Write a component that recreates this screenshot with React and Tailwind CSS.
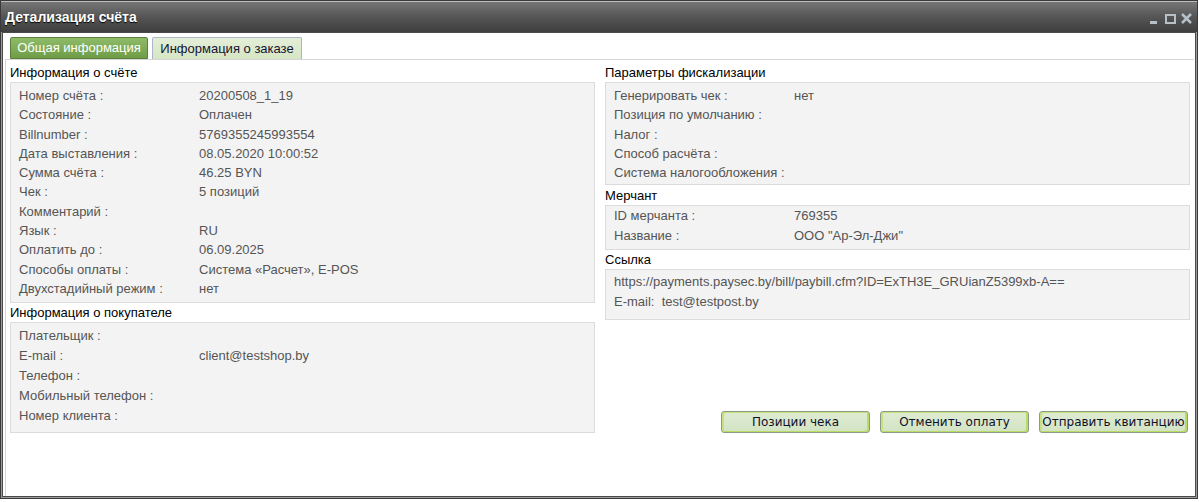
import React from "react";

const font = { fontFamily: '"Liberation Sans", Arial, sans-serif' };

const invoiceRows = [
  ["Номер счёта :", "20200508_1_19"],
  ["Состояние :", "Оплачен"],
  ["Billnumber :", "5769355245993554"],
  ["Дата выставления :", "08.05.2020 10:00:52"],
  ["Сумма счёта :", "46.25 BYN"],
  ["Чек :", "5 позиций"],
  ["Комментарий :", ""],
  ["Язык :", "RU"],
  ["Оплатить до :", "06.09.2025"],
  ["Способы оплаты :", "Система «Расчет», E-POS"],
  ["Двухстадийный режим :", "нет"],
];

const buyerRows = [
  ["Плательщик :", ""],
  ["E-mail :", "client@testshop.by"],
  ["Телефон :", ""],
  ["Мобильный телефон :", ""],
  ["Номер клиента :", ""],
];

const fiscalRows = [
  ["Генерировать чек :", "нет"],
  ["Позиция по умолчанию :", ""],
  ["Налог :", ""],
  ["Способ расчёта :", ""],
  ["Система налогообложения :", ""],
];

const merchantRows = [
  ["ID мерчанта :", "769355"],
  ["Название :", "ООО \"Ар-Эл-Джи\""],
];

function Rows({ rows, rowClass }) {
  return rows.map(([label, value]) => (
    <div key={label} className={`flex ${rowClass}`}>
      <span className="w-[180px] shrink-0">{label}</span>
      <span>{value}</span>
    </div>
  ));
}

function Section({ title, className, children }) {
  return (
    <div>
      <div className="h-[19px] leading-[19px] text-black">{title}</div>
      <div className={`bg-[#f3f3f3] border border-[#dcdcdc] px-2 text-[#555] ${className}`}>
        {children}
      </div>
    </div>
  );
}

function Button({ children }) {
  return (
    <button
      className="w-[149px] h-[22px] rounded-[3px] border border-[#8e9a88] bg-gradient-to-b from-[#dfecd3] to-[#d2e3c3] text-[12px] text-[#10102a] shadow-[inset_2px_1px_0_#c6e27e,inset_-2px_-1px_0_#b9dc62]"
      style={{ fontFamily: '"DejaVu Sans", Verdana, sans-serif' }}
    >
      {children}
    </button>
  );
}

export default function App() {
  return (
    <div className="w-[1199px] h-[502px] bg-white overflow-hidden text-[13px]" style={font}>
      <div className="w-[1198px] h-[499px] border border-[#3a3a3a] bg-[#9c9c9c] flex flex-col">
        {/* Title bar */}
        <div className="h-[31px] shrink-0 flex items-center justify-between pl-1 pr-[4px] bg-gradient-to-b from-[#767676] via-[#555] to-[#3e3e3e] border-t border-[#bdbdbd]">
          <span className="text-white font-bold text-[14px] [text-shadow:0_1px_1px_#000]">
            Детализация счёта
          </span>
          <svg width="44" height="12" viewBox="0 0 44 12" className="mt-[3px]">
            <rect x="1" y="8" width="7" height="3" fill="#b6c0c8" />
            <rect x="17" y="2" width="9" height="8" fill="none" stroke="#b6c0c8" strokeWidth="2" />
            <path d="M33 1 L42 10 M42 1 L33 10" stroke="#b6c0c8" strokeWidth="2.5" />
          </svg>
        </div>

        {/* Body */}
        <div className="flex-1 px-px pb-px flex">
          <div className="flex-1 bg-white border border-[#4a4a4a] pl-[2px] pr-[1px] pt-[4px] flex flex-col">
            {/* Tabs */}
            <div className="flex gap-[4px] pl-[5px] h-[22px] items-end">
              <div className="w-[138px] h-[22px] border border-[#5b7f3c] bg-gradient-to-b from-[#8ebb68] to-[#6f9d47] text-white flex items-center justify-center rounded-t-[2px]">
                Общая информация
              </div>
              <div className="w-[150px] h-[22px] border border-[#a9b7c6] border-b-0 bg-gradient-to-b from-[#e4eed8] to-[#d6e6c4] text-[#141432] flex items-center justify-center rounded-t-[2px]">
                Информация о заказе
              </div>
            </div>

            {/* Tab panel */}
            <div className="flex-1 border-l border-t border-[#d6d6d6] px-[4px] pt-[3px]">
              <div className="grid grid-cols-2 gap-[10px]">
                {/* Left column */}
                <div className="flex flex-col">
                  <Section title="Информация о счёте" className="pt-[3px] pb-[4px]">
                    <Rows rows={invoiceRows} rowClass="h-[19.3px] leading-[19.3px]" />
                  </Section>
                  <Section title="Информация о покупателе" className="pt-[3px] pb-[6px]">
                    <Rows rows={buyerRows} rowClass="h-[20px] leading-[20px]" />
                  </Section>
                </div>

                {/* Right column */}
                <div className="flex flex-col justify-between">
                  <div className="flex flex-col">
                    <Section title="Параметры фискализации" className="pt-[3px] pb-[2px]">
                      <Rows rows={fiscalRows} rowClass="h-[19.3px] leading-[19.3px]" />
                    </Section>
                    <div className="mt-[1px]">
                      <Section title="Мерчант" className="pt-0 pb-[3px]">
                        <Rows rows={merchantRows} rowClass="h-[20px] leading-[20px]" />
                      </Section>
                    </div>
                    <Section title="Ссылка" className="pt-[2px] pb-[8px]">
                      <div className="h-[19.5px] leading-[19.5px]">
                        https://payments.paysec.by/bill/paybill.cfm?ID=ExTH3E_GRUianZ5399xb-A==
                      </div>
                      <div className="h-[19.5px] leading-[19.5px] whitespace-pre">
                        {"E-mail:  test@testpost.by"}
                      </div>
                    </Section>
                  </div>
                  <div className="flex justify-end gap-[10px] pr-[2px]">
                    <Button>Позиции чека</Button>
                    <Button>Отменить оплату</Button>
                    <Button>Отправить квитанцию</Button>
                  </div>
                </div>
              </div>
            </div>
          </div>
        </div>
      </div>
    </div>
  );
}
